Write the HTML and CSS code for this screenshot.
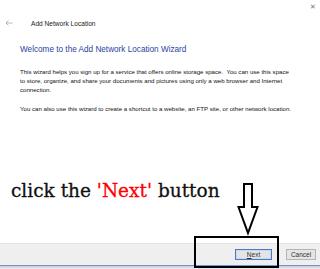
FILE: index.html
```html
<!DOCTYPE html>
<html lang="en">
<head>
    <meta charset="UTF-8">
    <meta name="viewport" content="width=device-width, initial-scale=1.0">
    <title>Add Network Location</title>
    <link rel="stylesheet" href="styles.css">
</head>
<body>
    <div class="window">
        <div class="topbar">
            <span class="close">&#x2715;</span>
        </div>
        <div class="titlerow">
            <svg class="back" width="8" height="6" viewBox="0 0 8 6">
                <path d="M7.5 3H1M3.5 0.5L1 3l2.5 2.5" fill="none" stroke="#a8a8a8" stroke-width="0.8"/>
            </svg>
            <span class="title">Add Network Location</span>
        </div>
        <div class="content">
            <h1>Welcome to the Add Network Location Wizard</h1>
            <p>This wizard helps you sign up for a service that offers online storage space.&nbsp; You can use this space to store, organize, and share your documents and pictures using only a web browser and Internet connection.</p>
            <p>You can also use this wizard to create a shortcut to a website, an FTP site, or other network location.</p>
            <div class="caption">click the <span class="red">'Next'</span> button</div>
        </div>
        <div class="footer">
            <button class="btn next"><u>N</u>ext</button>
            <button class="btn">Cancel</button>
        </div>
        <div class="shadow"></div>

        <svg class="arrow" width="24" height="54" viewBox="0 0 24 54">
            <path d="M5 1H13V24H18.5L9 50L-0.5 24H5Z" transform="translate(3 0)" fill="#fff" stroke="#000" stroke-width="2" stroke-linejoin="miter"/>
        </svg>
        <div class="highlight"></div>
    </div>
</body>
</html>
```

FILE: styles.css
```css
body {
    margin: 0;
    background: #fff;
    font-family: "Liberation Sans", Arial, sans-serif;
}
.window {
    position: relative;
    width: 320px;
    height: 269px;
    overflow: hidden;
    display: flex;
    flex-direction: column;
}
.topbar {
    height: 14px;
    display: flex;
    justify-content: flex-end;
    align-items: center;
    padding-right: 4px;
}
.close {
    font-size: 7px;
    color: #777;
}
.titlerow {
    height: 18px;
    display: flex;
    align-items: center;
    padding-left: 5px;
}
.back {
    margin-right: 18px;
}
.title {
    font-size: 6.6px;
    color: #222;
}
.content {
    flex: 1;
    padding: 13px 20px 0 20px;
}
h1 {
    font-size: 8.2px;
    font-weight: normal;
    color: #2a3f9e;
    margin: 0 0 13px 0;
}
p {
    font-size: 6.1px;
    line-height: 9px;
    color: #111;
    margin: 0 7px 10px 0;
}
.caption {
    margin: 67px 0 0 -9px;
    font-family: "DejaVu Serif", "Liberation Serif", serif;
    font-size: 18.5px;
    color: #111;
    -webkit-text-stroke: 0.3px #111;
}
.red {
    color: #f00;
    -webkit-text-stroke: 0.3px #f00;
}
.footer {
    height: 21px;
    background: #efefef;
    border-top: 1px solid #e4e4e4;
    border-bottom: 1px solid #6f95cf;
    display: flex;
    justify-content: flex-end;
    align-items: center;
    gap: 14px;
    padding-right: 4px;
}
.btn {
    width: 30px;
    height: 11px;
    padding: 0;
    font-family: "Liberation Sans", Arial, sans-serif;
    font-size: 6.5px;
    color: #333;
    background: #e4e4e4;
    border: 1px solid #b5b5b5;
}
.next {
    width: 37px;
    border-color: #4c7ac9;
    box-shadow: inset 0 0 0 1px #c8d8f0;
}
.shadow {
    height: 3px;
    background: linear-gradient(#c8c8c8, #f0f0f0);
}
.arrow {
    position: absolute;
    left: 236px;
    top: 183px;
}
.highlight {
    position: absolute;
    left: 194px;
    top: 236px;
    width: 81px;
    height: 28px;
    border: 2px solid #000;
}
```
